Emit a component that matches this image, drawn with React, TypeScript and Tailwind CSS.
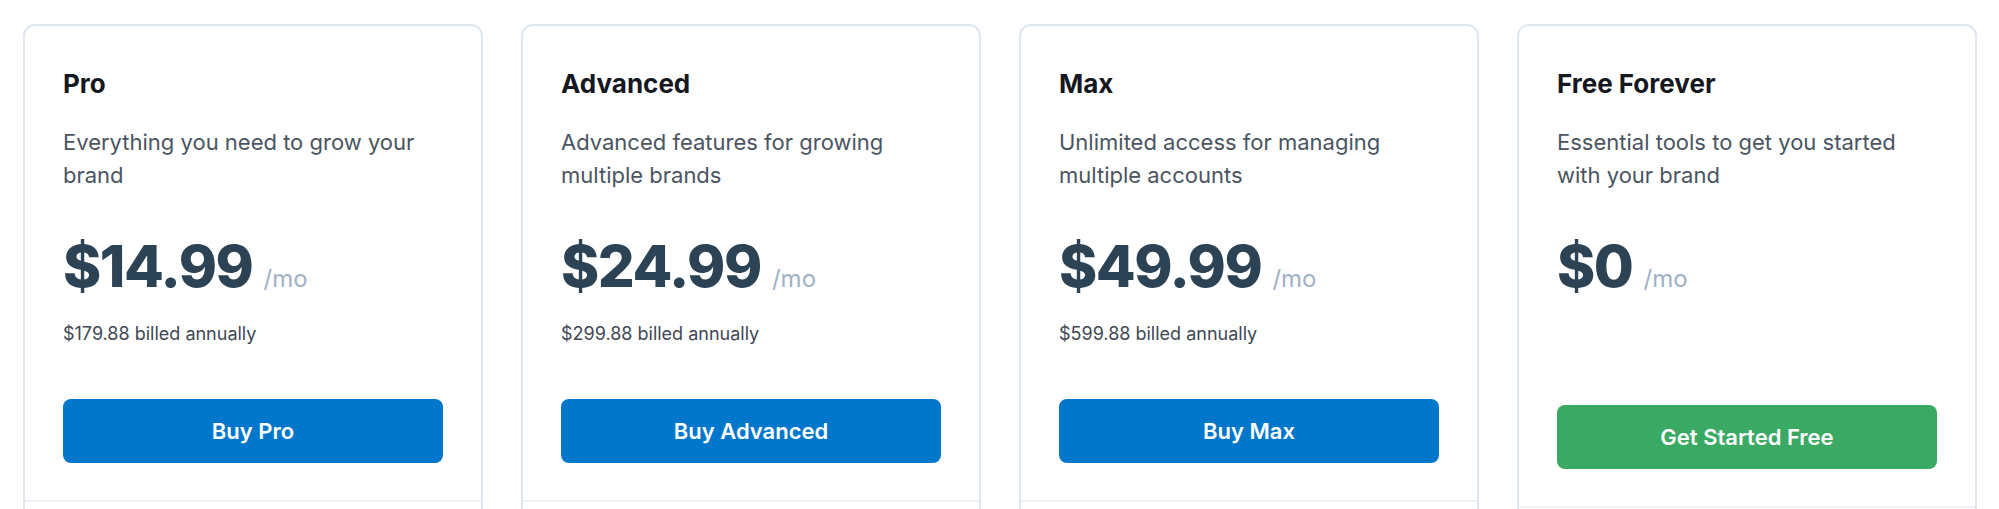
import React from 'react';

type Plan = {
  name: string;
  description: string;
  price: string;
  billed?: string;
  cta: string;
  free?: boolean;
};

const plans: Plan[] = [
  {
    name: 'Pro',
    description: 'Everything you need to grow your brand',
    price: '$14.99',
    billed: '$179.88 billed annually',
    cta: 'Buy Pro',
  },
  {
    name: 'Advanced',
    description: 'Advanced features for growing multiple brands',
    price: '$24.99',
    billed: '$299.88 billed annually',
    cta: 'Buy Advanced',
  },
  {
    name: 'Max',
    description: 'Unlimited access for managing multiple accounts',
    price: '$49.99',
    billed: '$599.88 billed annually',
    cta: 'Buy Max',
  },
  {
    name: 'Free Forever',
    description: 'Essential tools to get you started with your brand',
    price: '$0',
    cta: 'Get Started Free',
    free: true,
  },
];

const PlanCard: React.FC<{ plan: Plan }> = ({ plan }) => (
  <div className="flex flex-col rounded-xl border-2 border-[#e0e7f0] bg-white">
    <div className="px-[38px] pt-[42px] pb-[37px]">
      <h3 className="text-[26px] font-bold leading-8 text-[#15181f]">{plan.name}</h3>

      <p className="mt-[26px] text-[22px] leading-[33px] text-[#4a5561]">
        {plan.description}
      </p>

      {/* Price */}
      <div className="mt-[45px] flex items-baseline">
        <span className="text-[58px] font-extrabold leading-[58px] tracking-tight text-[#2b4354]">
          {plan.price}
        </span>
        <span className="ml-[11px] text-[24px] text-[#9fb1c6]">/mo</span>
      </div>

      {plan.billed ? (
        <p className="mt-[25px] text-[18px] leading-6 text-[#3f4853]">{plan.billed}</p>
      ) : (
        <div className="h-[52px]" />
      )}

      <button
        className={`${plan.free ? 'mt-[56px] bg-[#39a964]' : 'mt-[53px] bg-[#0077cb]'} flex h-16 w-full items-center justify-center rounded-lg text-[22px] font-semibold text-white`}
      >
        {plan.cta}
      </button>
    </div>

    {/* Features (cut off below the fold) */}
    <div className="h-[200px] border-t-2 border-[#eef2f6]" />
  </div>
);

export default function App() {
  return (
    <div
      className="min-h-screen bg-white"
      style={{ fontFamily: 'Inter, "Noto Sans", sans-serif' }}
    >
      <div className="grid grid-cols-4 gap-[38px] pl-[23px] pr-[22px] pt-[24px]">
        {plans.map((plan) => (
          <PlanCard key={plan.name} plan={plan} />
        ))}
      </div>
    </div>
  );
}
